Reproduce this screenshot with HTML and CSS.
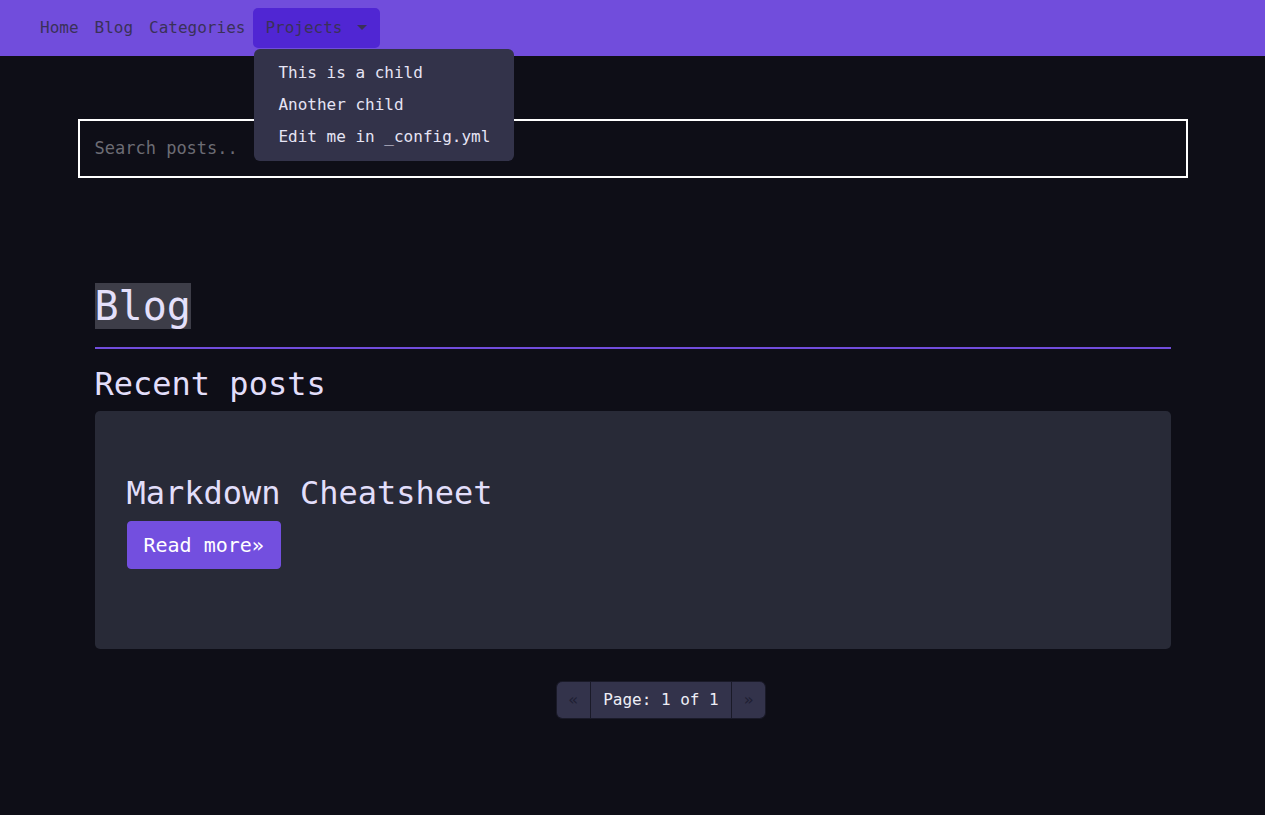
FILE: index.html
```html
<!DOCTYPE html>
<html lang="en">
<head>
<meta charset="utf-8">
<title>Blog</title>
<link rel="stylesheet" href="styles.css">
</head>
<body>
<nav class="navbar">
  <ul class="nav-list">
    <li><a class="nav-link" href="#">Home</a></li>
    <li><a class="nav-link" href="#">Blog</a></li>
    <li><a class="nav-link" href="#">Categories</a></li>
    <li class="dropdown">
      <a class="nav-link nav-pill" href="#">Projects <span class="caret"></span></a>
      <ul class="dropdown-menu">
        <li><a class="dropdown-item" href="#">This is a child</a></li>
        <li><a class="dropdown-item" href="#">Another child</a></li>
        <li><a class="dropdown-item" href="#">Edit me in _config.yml</a></li>
      </ul>
    </li>
  </ul>
</nav>

<div class="container">
  <input class="search" type="text" placeholder="Search posts..">

  <main class="content">
    <h1 class="page-title"><span class="title-mark">Blog</span></h1>
    <hr class="rule">
    <h2 class="section-title">Recent posts</h2>
    <article class="card">
      <h3 class="card-title">Markdown Cheatsheet</h3>
      <p class="card-actions"><a class="btn" href="#">Read more»</a></p>
    </article>
    <div class="pager">
      <ul class="pagination">
        <li class="page-item disabled"><span class="page-link">«</span></li>
        <li class="page-item"><span class="page-link current">Page: 1 of 1</span></li>
        <li class="page-item disabled"><span class="page-link">»</span></li>
      </ul>
    </div>
  </main>
</div>
</body>
</html>
```

FILE: styles.css
```css
* { box-sizing: border-box; }

html, body {
  margin: 0;
  padding: 0;
}

body {
  background: #0e0e17;
  color: #e2defa;
  font-family: "DejaVu Sans Mono", "Liberation Mono", monospace;
  font-size: 16px;
  line-height: 1.5;
}

a { text-decoration: none; }

.navbar {
  background: #714ddc;
  height: 56px;
  padding: 8px 32px;
}

.nav-list {
  list-style: none;
  margin: 0;
  padding: 0;
  display: flex;
  align-items: center;
}

.nav-link {
  display: block;
  padding: 8px 8px;
  color: #3a3158;
  line-height: 24px;
}

.nav-pill {
  background: #5026d3;
  border-radius: 5px;
  padding: 8px 13px 8px 12px;
}

.caret {
  display: inline-block;
  width: 0;
  height: 0;
  vertical-align: 3px;
  border-top: 5px solid #3a3158;
  border-left: 5px solid transparent;
  border-right: 5px solid transparent;
  margin-left: 5px;
}

.dropdown {
  position: relative;
}

.dropdown-menu {
  position: absolute;
  top: 41px;
  left: 1px;
  width: 260px;
  margin: 0;
  padding: 8px 0;
  list-style: none;
  background: #33334a;
  border-radius: 6px;
  z-index: 10;
}

.dropdown-item {
  display: block;
  padding: 4px 24px;
  line-height: 24px;
  color: #e6e4f4;
  white-space: nowrap;
}

.container {
  width: 1110px;
  margin: 0 auto;
  padding-top: 63px;
}

.search {
  display: block;
  width: 100%;
  height: 59px;
  padding: 15px 15px 17px;
  background: #0e0e17;
  border: 2px solid #ffffff;
  border-radius: 0;
  color: #e2defa;
  font-family: "DejaVu Sans Mono", "Liberation Mono", monospace;
  font-size: 17px;
  line-height: 23px;
  outline: none;
}

.search::placeholder {
  color: #6c6c74;
}

.content {
  padding: 104px 17px 60px;
}

.page-title {
  margin: 0;
  font-size: 40px;
  font-weight: normal;
  line-height: 48px;
}

.title-mark {
  background: #3d3d48;
  color: #e4e0fb;
}

.rule {
  margin: 17px 0 0;
  border: 0;
  height: 2px;
  background: #714ddc;
}

.section-title {
  margin: 16px 0 8px;
  font-size: 32px;
  font-weight: normal;
  line-height: 38.4px;
}

.card {
  background: #282a37;
  border-radius: 5px;
  padding: 63px 32px 64px;
}

.card-title {
  margin: 0 0 8px;
  font-size: 32px;
  font-weight: normal;
  line-height: 38.4px;
  color: #e2defa;
}

.card-actions {
  margin: 0 0 16px;
}

.btn {
  display: inline-block;
  padding: 8px 16px;
  background: #734fdf;
  border: 1px solid #734fdf;
  border-radius: 4px;
  color: #ffffff;
  font-size: 20px;
  line-height: 30px;
}

.pager {
  display: flex;
  margin-top: 32px;
  padding-left: 461px;
}

.pagination {
  display: flex;
  list-style: none;
  margin: 0;
  padding: 0;
  border-radius: 6px;
  overflow: hidden;
  border: 1px solid #1a1a28;
}

.page-item + .page-item .page-link {
  border-left: 1px solid #1a1a28;
}

.page-link {
  display: block;
  padding: 6px 12px;
  background: #33334b;
  color: #eeeef6;
  line-height: 24px;
}

.disabled .page-link {
  color: #1f1f33;
}
```
